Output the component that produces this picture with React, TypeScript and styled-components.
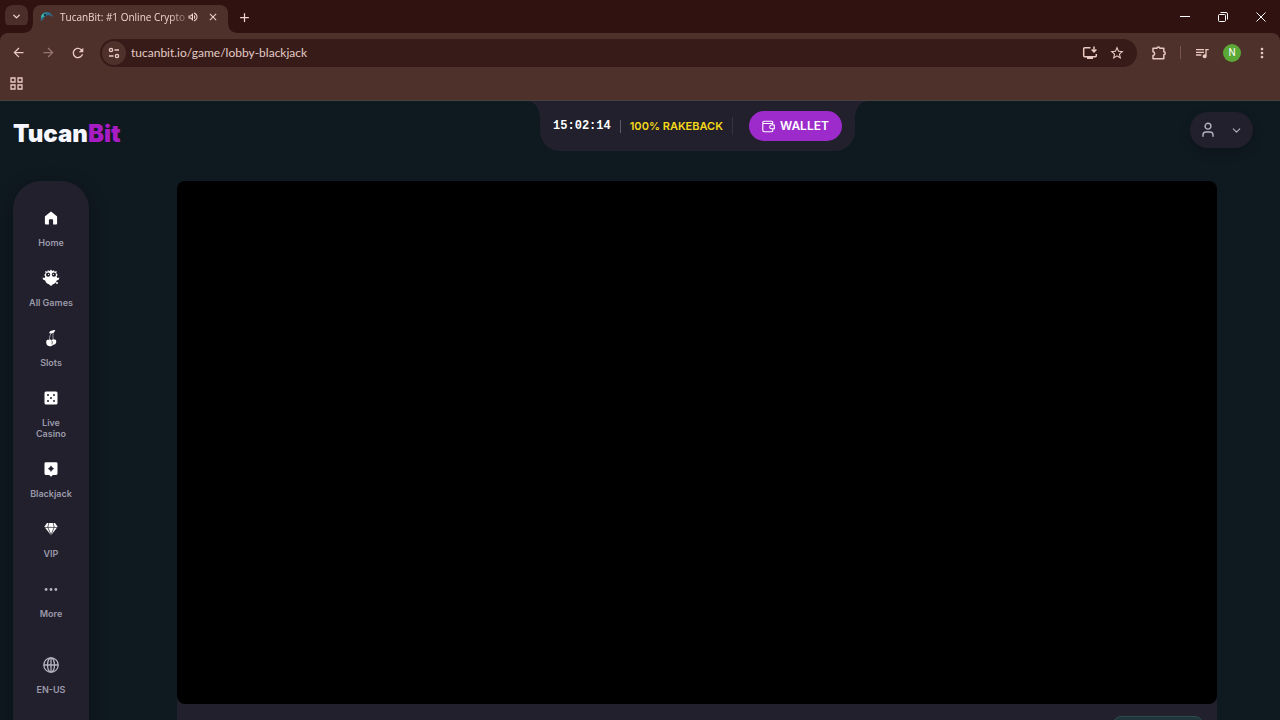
import React from "react";
import styled, { createGlobalStyle } from "styled-components";
import {
  MdArrowBack, MdArrowForward, MdRefresh, MdStarBorder, MdQueueMusic,
  MdOutlineVolumeUp, MdClose, MdAdd, MdMoreVert,
} from "react-icons/md";
import { ChevronDown } from "lucide-react";

const Global = createGlobalStyle`
  * { box-sizing: border-box; }
  body { margin: 0; background: #0f1920; font-family: Inter, "Liberation Sans", sans-serif; }
  button { border: 0; padding: 0; background: none; color: inherit; font: inherit; cursor: pointer; }
  a { color: inherit; text-decoration: none; }
  svg { display: block; flex: none; }
`;

const Window = styled.div`
  display: flex;
  flex-direction: column;
  height: 100vh;
  overflow: hidden;
`;

/* Browser chrome */
const TabStrip = styled.div`
  display: flex;
  align-items: flex-start;
  height: 33px;
  padding: 5px 0 0 5px;
  background: #301311;
  color: #f0d5cf;
  flex: none;
`;

const TabSearch = styled.button`
  display: grid;
  place-items: center;
  width: 23px;
  height: 23px;
  margin-right: 5px;
  border-radius: 8px;
  background: #4b2d29;
`;

const Tab = styled.div`
  position: relative;
  display: flex;
  align-items: center;
  gap: 7px;
  width: 195px;
  height: 28px;
  padding: 0 9px 4px 7px;
  border-radius: 8px 8px 0 0;
  background: #4f312c;
  &::before, &::after {
    content: "";
    position: absolute;
    bottom: 0;
    width: 8px;
    height: 8px;
  }
  &::before { left: -8px; background: radial-gradient(circle at 0 0, transparent 7px, #4f312c 8px); }
  &::after { right: -8px; background: radial-gradient(circle at 100% 0, transparent 7px, #4f312c 8px); }
`;

const TabTitle = styled.span`
  flex: 1;
  min-width: 0;
  margin-right: -6px;
  white-space: nowrap;
  font: 10px/16px "Open Sans", "Noto Sans", sans-serif;
  mask-image: linear-gradient(90deg, #000 88%, rgba(0, 0, 0, 0.3));
`;

const TabAction = styled.button`
  display: grid;
  place-items: center;
  width: 13px;
  height: 16px;
`;

const NewTab = styled(TabAction)`
  width: 16px;
  height: 24px;
  margin-left: 8px;
`;

const WindowControls = styled.div`
  display: flex;
  margin-left: auto;
`;

const WindowButton = styled.button`
  display: grid;
  place-items: center;
  width: 38px;
  height: 23px;
`;

const BrowserBars = styled.div`
  flex: none;
  border-bottom: 1px solid #47413f;
  border-radius: 8px 8px 0 0;
  background: #4f312c;
  color: #e9c9c2;
  box-shadow: 0 -8px 0 #301311;
`;

const Toolbar = styled.div`
  display: flex;
  align-items: center;
  gap: 14px;
  height: 39px;
  padding: 0 10px;
`;

const ToolButton = styled.button<{ $dim?: boolean; $narrow?: boolean }>`
  display: grid;
  place-items: center;
  width: ${(p) => (p.$narrow ? 12 : 16)}px;
  height: 16px;
  opacity: ${(p) => (p.$dim ? 0.45 : 1)};
`;

const AddressBar = styled.div`
  display: flex;
  align-items: center;
  gap: 11px;
  flex: 1;
  height: 28px;
  padding: 0 12px 0 2px;
  border-radius: 14px;
  background: #371b18;
`;

const SiteInfo = styled.button`
  display: grid;
  place-items: center;
  width: 24px;
  height: 24px;
  border-radius: 50%;
  background: #4f312c;
`;

const AddressInput = styled.input`
  flex: 1;
  min-width: 0;
  margin-left: -6px;
  padding: 0;
  border: 0;
  outline: 0;
  background: none;
  color: #e3cbc6;
  font: 12px/20px Lato, "Noto Sans", sans-serif;
`;

const ToolDivider = styled.span`
  width: 1px;
  height: 13px;
  background: #79544d;
`;

const ToolbarEnd = styled.div`
  display: flex;
  align-items: center;
  gap: 13px;
`;

const Avatar = styled.button`
  width: 18px;
  height: 18px;
  border-radius: 50%;
  background: #5ba836;
  color: #fff;
  font: 10px/18px Roboto, sans-serif;
`;

const Bookmarks = styled.div`
  display: flex;
  align-items: center;
  height: 28px;
  padding: 0 10px 5px;
`;

/* Casino site */
const Site = styled.div`
  flex: 1;
  min-height: 0;
  overflow: hidden;
  background: #0f1920;
`;

const Header = styled.header`
  display: grid;
  grid-template-columns: 129px 1fr auto 1fr;
  align-items: start;
  height: 80px;
  padding: 0 27px 0 13px;
`;

const Logo = styled.a`
  grid-column: 1 / 3;
  justify-self: start;
  margin-top: 18px;
  color: #f7f8ff;
  font-size: 24px;
  font-weight: 900;
  line-height: 30px;
  span { color: #a81cc4; }
`;

const StatusPanel = styled.div`
  position: relative;
  display: flex;
  align-items: center;
  gap: 9px;
  height: 50px;
  padding: 0 13px;
  border-radius: 0 0 20px 20px;
  background: #22202d;
  &::before, &::after {
    content: "";
    position: absolute;
    top: 0;
    width: 12px;
    height: 16px;
  }
  &::before { right: 100%; background: radial-gradient(ellipse 12px 16px at 0 100%, transparent 96%, #22202d); }
  &::after { left: 100%; background: radial-gradient(ellipse 12px 16px at 100% 100%, transparent 96%, #22202d); }
`;

const Clock = styled.time`
  color: #fff;
  font: bold 12px/16px "Liberation Mono", monospace;
`;

const Rakeback = styled.span`
  color: #f5da18;
  font-size: 11px;
  font-weight: 600;
  line-height: 16px;
`;

const PanelDivider = styled.span<{ $faint?: boolean }>`
  width: 1px;
  height: ${(p) => (p.$faint ? 18 : 13)}px;
  background: ${(p) => (p.$faint ? "#353341" : "#5b5967")};
`;

const WalletButton = styled.button`
  display: flex;
  align-items: center;
  justify-content: center;
  gap: 5px;
  height: 30px;
  margin-left: 7px;
  padding: 0 13px;
  border-radius: 15px;
  background: #9d2bcb;
  color: #fff;
  font-size: 12px;
  font-weight: 600;
  line-height: 16px;
`;

const UserMenu = styled.button`
  display: flex;
  align-items: center;
  justify-content: space-between;
  justify-self: end;
  width: 63px;
  height: 36px;
  margin-top: 11px;
  padding: 0 10px 0 11px;
  border-radius: 18px;
  background: #22202d;
  color: #b3b2c3;
  box-shadow: 0 4px 12px rgba(0, 0, 0, 0.15);
`;

const Body = styled.div`
  display: flex;
  align-items: flex-start;
  gap: 25px;
  padding-left: 13px;
`;

const Sidebar = styled.nav`
  display: flex;
  flex-direction: column;
  align-items: center;
  gap: 20px;
  width: 76px;
  flex: none;
  padding: 27px 10px 60px;
  border-radius: 28px;
  background: #22202d;
  box-shadow: 0 6px 20px rgba(0, 0, 0, 0.32);
`;

const NavItem = styled.a<{ $muted?: boolean }>`
  display: flex;
  flex-direction: column;
  align-items: center;
  gap: 9px;
  width: 48px;
  color: #9c9aa9;
  font-size: 9px;
  font-weight: 600;
  line-height: 11px;
  text-align: center;
  svg { color: ${(p) => (p.$muted ? "#b5b3c1" : "#fff")}; }
`;

const LanguageItem = styled(NavItem)`
  margin-top: 16px;
`;

const Main = styled.main`
  flex: 1;
  min-width: 0;
  display: flex;
  justify-content: center;
`;

const GameCard = styled.section`
  width: 100%;
  max-width: 1040px;
  border-radius: 8px;
  background: #22202d;
`;

const GameStage = styled.div`
  aspect-ratio: 1040 / 523;
  border-radius: 8px;
  background: #000;
`;

const GameBar = styled.div`
  display: flex;
  justify-content: flex-end;
  height: 56px;
  padding: 12px 14px;
`;

const ModeSwitch = styled.button`
  width: 90px;
  height: 32px;
  border: 1px solid #2b4d50;
  border-radius: 8px;
  background: #20353b;
`;

const Favicon = () => (
  <svg width="13" height="13" viewBox="0 0 13 13">
    <path d="M1 10C0 4 3 1 7 1c3 0 5 2 6 5C10 4 8 4 6 5 3 6 4 9 1 10Z" fill="#306b88" />
    <path d="M1 7C1 3 4 1 7 2L5 5Z" fill="#39b6a2" />
    <circle cx="5" cy="3.7" r="1.2" fill="#132d50" />
  </svg>
);

const TuneIcon = () => (
  <svg width="14" height="14" viewBox="0 0 14 14" fill="none" stroke="currentColor" strokeWidth="1.4">
    <circle cx="4" cy="4" r="1.6" /><path d="M7.500 4H12M2 10h4.500" />
    <circle cx="10" cy="10" r="1.600" />
  </svg>
);

const InstallIcon = () => (
  <svg width="16" height="16" viewBox="0 0 16 16" fill="none" stroke="currentColor" strokeWidth="1.5">
    <path d="M8.500 2.700H2.700a1 1 0 0 0-1 1v7.100a1 1 0 0 0 1 1h10.600a1 1 0 0 0 1-1V9M5 13.200h6M12 1.500v5M9.600 4.500 12 6.900l2.400-2.400" />
  </svg>
);

const PuzzleIcon = () => (
  <svg width="16" height="16" viewBox="0 0 16 16" fill="none" stroke="currentColor" strokeWidth="1.5" strokeLinejoin="round">
    <path d="M2 3.300h4c0-1.800 2.800-1.800 2.800 0h4v3.500c1.900 0 1.900 3 0 3v4H2v-3.300c2.200-.4 2.200-3.300 0-3.700Z" />
  </svg>
);

const AppsIcon = () => (
  <svg width="13" height="13" viewBox="0 0 13 13" fill="none" stroke="currentColor" strokeWidth="1.3">
    <path d="M1 1h4v4H1zM8 1h4v4H8zM1 8h4v4H1zM8 8h4v4H8z" />
  </svg>
);

const WalletIcon = () => (
  <svg width="13" height="13" viewBox="0 0 13 13" fill="none" stroke="currentColor" strokeWidth="1.100">
    <path d="M10.800 4.800V3.500M10.800 9v1.500a1.300 1.300 0 0 1-1.300 1.300H2.300A1.500 1.500 0 0 1 .8 10.300V2.500A1.300 1.300 0 0 1 2.100 1.200h7.600a1.150 1.150 0 0 1 0 2.300H1" />
    <path d="M12.300 5H9.600a1.900 1.900 0 0 0 0 3.800h2.700Z" />
  </svg>
);

const UserIcon = () => (
  <svg width="14" height="16" viewBox="0 0 14 16" fill="none" stroke="currentColor" strokeWidth="1.4" strokeLinecap="round">
    <circle cx="7" cy="4.200" r="2.900" />
    <path d="M2 14.200v-1.200a3 3 0 0 1 3-3h4a3 3 0 0 1 3 3v1.200" />
  </svg>
);

const HomeIcon = () => (
  <svg width="20" height="20" viewBox="0 0 20 20" fill="currentColor">
    <path d="M10 3.600 15.600 8a1 1 0 0 1 .5.800v6.600a1 1 0 0 1-1 1h-3v-4.300a.8.800 0 0 0-.8-.8H8.700a.8.800 0 0 0-.8.800v4.300h-3a1 1 0 0 1-1-1V8.800a1 1 0 0 1 .5-.8Z" />
  </svg>
);

const OwlIcon = () => (
  <svg width="20" height="20" viewBox="0 0 20 20" fill="currentColor">
    <path d="M10 1.500 11.200 3l2-.8.200 1.500 2.300-.6-.4 2.200 1.300 1.500-1 2 .8 1.200 1.900-.6-.4 2.200-2.200.8c-.6 2.100-1.900 3.400-3.700 3.900L10 18l-2.100-1.700c-1.800-.5-3.100-1.800-3.700-3.900L2 11.600l-.4-2.200 1.900.6.8-1.200-1-2 1.300-1.500-.4-2.200 2.300.6.200-1.500 2 .8Z" />
    <circle cx="7.100" cy="6.700" r="2.100" fill="#22202d" />
    <circle cx="12.900" cy="6.700" r="2.100" fill="#22202d" />
    <circle cx="7.600" cy="6.300" r=".6" /><circle cx="12.400" cy="6.300" r=".6" />
    <circle cx="16" cy="15" r="1" />
  </svg>
);

const CherryIcon = () => (
  <svg width="20" height="20" viewBox="0 0 20 20">
    <path d="M13 3.300C11.500 6 11.800 9 12.300 11.500M11 4.500C9 6 8.600 9 8.300 12" fill="none" stroke="#b9b8c4" strokeWidth=".8" />
    <path d="M8 5.300C9 2.200 11.500 2.200 14.300 1.900 13.400 4.800 11.300 5.700 8 5.300Z" fill="currentColor" />
    <path d="M5.200 14c0-2.600 2.300-2.300 3-2 1-.7 2-.4 2.400 0 1.200-1 2.100-.8 2.500-.5 2.400-.5 2.400 1.800 2 3-.4 1.600-1.600 2.400-3 2.200-1.100 1.500-2.600 1.600-3.700 1.500-2-.1-3.200-1.800-3.200-4.200Z" fill="currentColor" />
    <path d="M10.500 12.500c1 .9 1 2.700.2 3.800" fill="none" stroke="#22202d" strokeWidth=".7" />
  </svg>
);

const DiceIcon = () => (
  <svg width="20" height="20" viewBox="0 0 20 20">
    <rect x="3.500" y="3.500" width="13" height="13" rx="1.500" fill="currentColor" />
    <g fill="#22202d">
      <circle cx="7" cy="7" r="1" /><circle cx="13" cy="7" r="1" /><circle cx="10" cy="10" r="1" />
      <circle cx="7" cy="13" r="1" /><circle cx="13" cy="13" r="1" />
    </g>
  </svg>
);

const CardIcon = () => (
  <svg width="20" height="20" viewBox="0 0 20 20">
    <path d="M4.800 3.300h10.400a1.300 1.300 0 0 1 1.300 1.300v10a1.300 1.300 0 0 1-1.300 1.300h-3.300L10 17.800l-1.900-1.900H4.800a1.300 1.300 0 0 1-1.300-1.300v-10a1.300 1.300 0 0 1 1.300-1.300Z" fill="currentColor" />
    <path d="m10 6.900 1.100 1.700 1.600 1.100-1.600 1.100L10 12.400l-1.100-1.600-1.600-1.100 1.600-1.100Z" fill="#22202d" stroke="#22202d" strokeWidth=".6" />
  </svg>
);

const DiamondIcon = () => (
  <svg width="20" height="20" viewBox="0 0 20 20">
    <path d="M6 4h8l2.700 3.800L10 16.200 3.300 7.800Z" fill="currentColor" />
    <path d="M3 8.400h14M6.800 8.400 10 15.800l3.200-7.400M7.800 3.800 6.800 8.400M12.200 3.800l1 4.600" fill="none" stroke="#22202d" strokeWidth=".7" />
  </svg>
);

const DotsIcon = () => (
  <svg width="20" height="20" viewBox="0 0 20 20" fill="currentColor">
    <circle cx="5.100" cy="10.500" r="1.400" /><circle cx="10" cy="10.500" r="1.400" /><circle cx="14.900" cy="10.500" r="1.400" />
  </svg>
);

const GlobeIcon = () => (
  <svg width="20" height="20" viewBox="0 0 20 20" fill="none" stroke="currentColor" strokeWidth="1.300">
    <circle cx="10" cy="10" r="7.200" /><ellipse cx="10" cy="10" rx="3.500" ry="7.200" /><path d="M2.800 10h14.400M10 2.800v14.400" />
  </svg>
);

const navItems = [
  { label: "Home", Icon: HomeIcon },
  { label: "All Games", Icon: OwlIcon },
  { label: "Slots", Icon: CherryIcon },
  { label: "Live Casino", Icon: DiceIcon },
  { label: "Blackjack", Icon: CardIcon },
  { label: "VIP", Icon: DiamondIcon },
  { label: "More", Icon: DotsIcon, muted: true },
];

export default function App() {
  return (
    <Window>
      <Global />
      <TabStrip>
        <TabSearch aria-label="Search tabs"><ChevronDown size={11} strokeWidth={3} /></TabSearch>
        <Tab>
          <Favicon />
          <TabTitle>TucanBit: #1 Online Crypto</TabTitle>
          <TabAction aria-label="Mute tab"><MdOutlineVolumeUp size={12} /></TabAction>
          <TabAction aria-label="Close tab"><MdClose size={12} /></TabAction>
        </Tab>
        <NewTab aria-label="New tab"><MdAdd size={15} /></NewTab>
        <WindowControls>
          <WindowButton aria-label="Minimize">
            <svg width="10" height="10" viewBox="0 0 10 10"><path d="M0 4.500h10" stroke="#fff" /></svg>
          </WindowButton>
          <WindowButton aria-label="Restore">
            <svg width="10" height="10" viewBox="0 0 10 10" fill="none" stroke="#fff"><rect x=".5" y="2.500" width="7" height="7" rx="1" /><path d="M2.500.5H8a1.500 1.500 0 0 1 1.500 1.500v5.500" /></svg>
          </WindowButton>
          <WindowButton aria-label="Close">
            <svg width="10" height="10" viewBox="0 0 10 10" stroke="#fff"><path d="m.5.5 9 9m0-9-9 9" /></svg>
          </WindowButton>
        </WindowControls>
      </TabStrip>
      <BrowserBars>
        <Toolbar>
          <ToolButton aria-label="Back"><MdArrowBack size={15} /></ToolButton>
          <ToolButton aria-label="Forward" $dim><MdArrowForward size={15} /></ToolButton>
          <ToolButton aria-label="Reload"><MdRefresh size={16} /></ToolButton>
          <AddressBar>
            <SiteInfo aria-label="Site information"><TuneIcon /></SiteInfo>
            <AddressInput aria-label="Address" defaultValue="tucanbit.io/game/lobby-blackjack" />
            <ToolButton aria-label="Install"><InstallIcon /></ToolButton>
            <ToolButton aria-label="Bookmark"><MdStarBorder size={16} /></ToolButton>
          </AddressBar>
          <ToolbarEnd>
            <ToolButton aria-label="Extensions"><PuzzleIcon /></ToolButton>
            <ToolDivider />
            <ToolButton aria-label="Media"><MdQueueMusic size={16} /></ToolButton>
            <Avatar>N</Avatar>
            <ToolButton aria-label="Menu"><MdMoreVert size={16} /></ToolButton>
          </ToolbarEnd>
        </Toolbar>
        <Bookmarks><ToolButton aria-label="Apps" $narrow><AppsIcon /></ToolButton></Bookmarks>
      </BrowserBars>
      <Site>
        <Header>
          <Logo href="#">Tucan<span>Bit</span></Logo>
          <StatusPanel>
            <Clock>15:02:14</Clock>
            <PanelDivider />
            <Rakeback>100% RAKEBACK</Rakeback>
            <PanelDivider $faint />
            <WalletButton><WalletIcon />WALLET</WalletButton>
          </StatusPanel>
          <UserMenu aria-label="Account"><UserIcon /><ChevronDown size={13} /></UserMenu>
        </Header>
        <Body>
          <Sidebar>
            {navItems.map(({ label, Icon, muted }) => (
              <NavItem key={label} href="#" $muted={muted}><Icon />{label}</NavItem>
            ))}
            <LanguageItem href="#" $muted><GlobeIcon />EN-US</LanguageItem>
          </Sidebar>
          <Main>
            <GameCard>
              <GameStage />
              <GameBar><ModeSwitch aria-label="Play mode" /></GameBar>
            </GameCard>
          </Main>
        </Body>
      </Site>
    </Window>
  );
}
